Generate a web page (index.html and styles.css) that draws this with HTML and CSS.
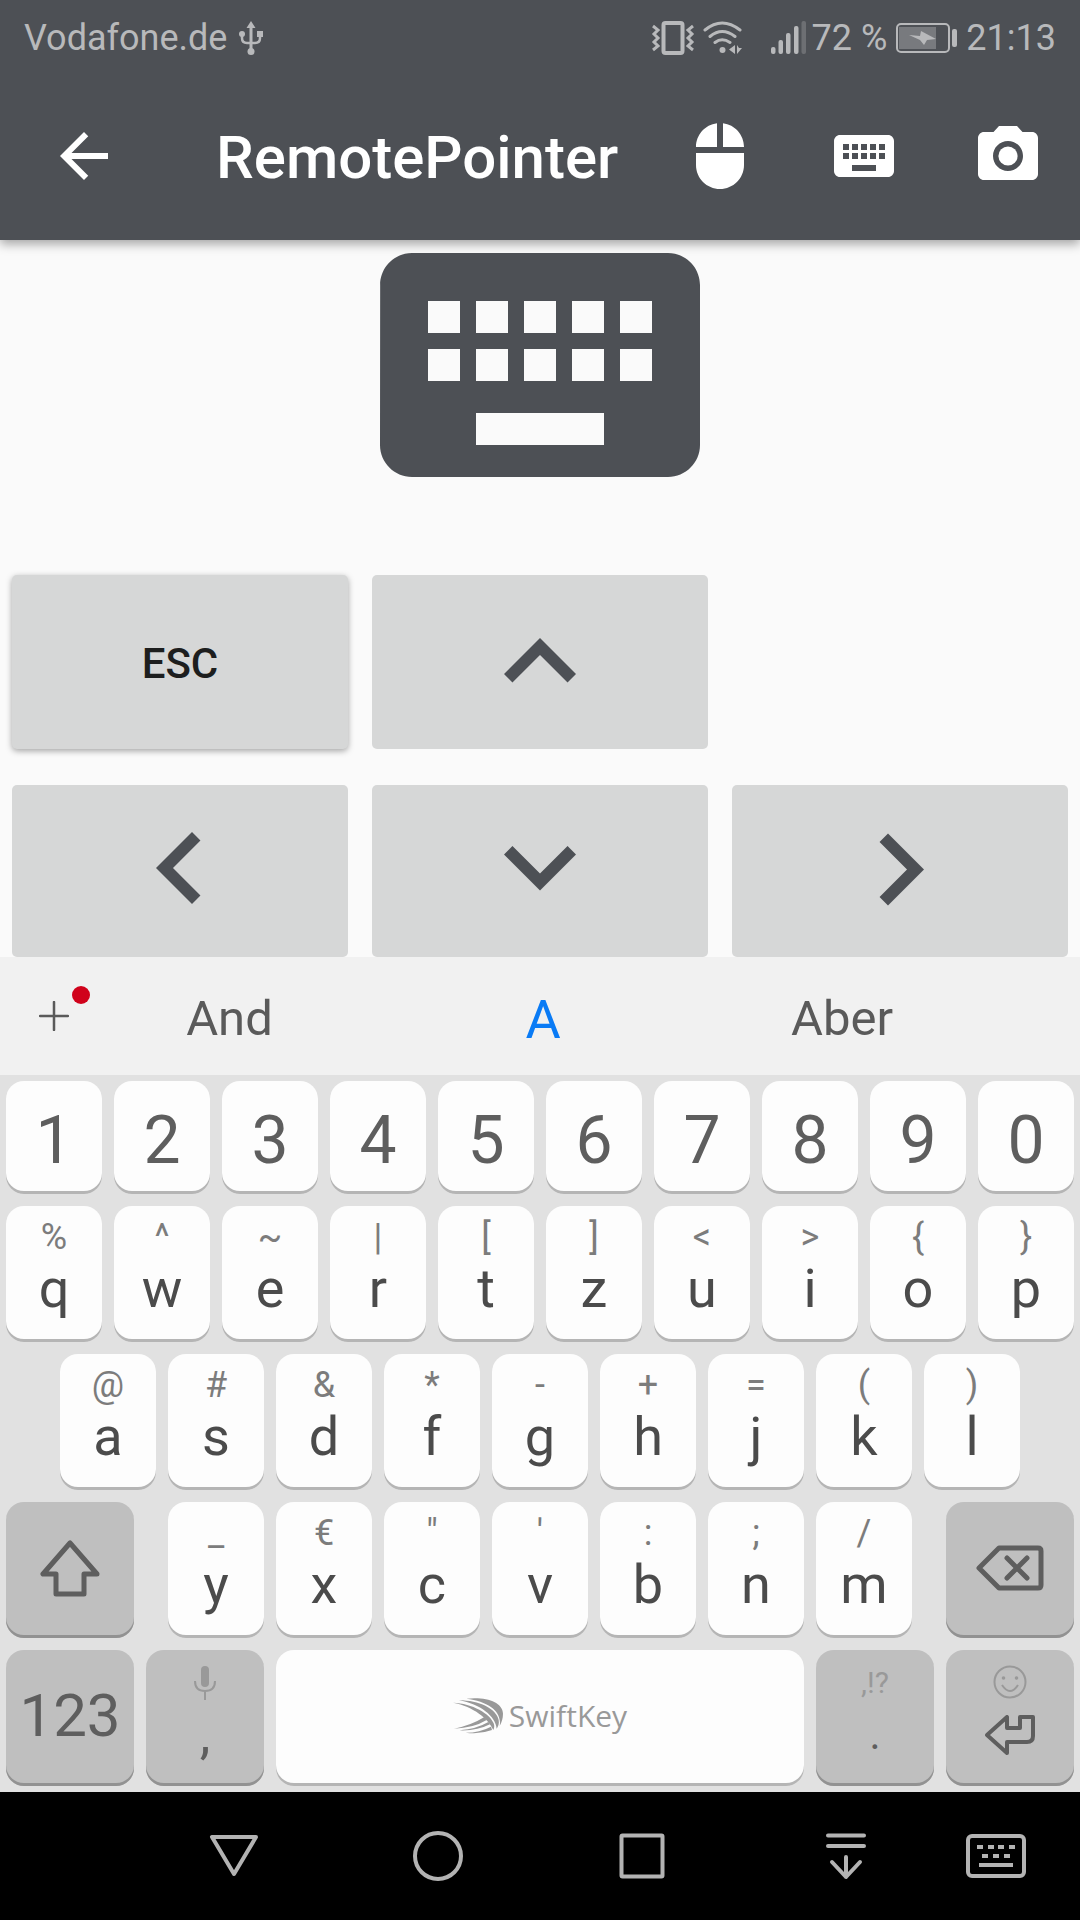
FILE: index.html
```
<!DOCTYPE html>
<html lang="en">
  <head>
    <meta charset="utf-8">
    <meta name="viewport" content="width=device-width, initial-scale=1">
    <title>RemotePointer</title>
    <link rel="stylesheet" href="styles.css">
  </head>
  <body>
    <header class="header">
      <div class="status">
        <span>Vodafone.de</span>
        <svg class="usb" width="24" height="34" viewBox="0 0 24 34" fill="currentColor">
          <path d="M12 0l4.500 7h-9zM10.500 6h3v22h-3z"/>
          <circle cx="3" cy="13" r="3"/>
          <rect x="18" y="10" width="6" height="6"/>
          <circle cx="12" cy="30.500" r="3.500"/>
          <path d="M3 14v3q0 5 5 5h8q5 0 5-5v-3" fill="none" stroke="currentColor" stroke-width="2.500"/>
        </svg>
        <span class="spacer"></span>
        <svg class="vibrate" width="44" height="34" viewBox="0 0 44 34" fill="none" stroke="currentColor">
          <rect x="12.500" y="2" width="19" height="30" rx="2" stroke-width="4"/>
          <path d="M2 5l5 4-4 4 4 4-4 4 4 4-5 4M42 5l-5 4 4 4-4 4 4 4-4 4 5 4" stroke-width="3"/>
        </svg>
        <svg class="wifi" width="40" height="34" viewBox="0 0 40 34" fill="none" stroke="currentColor" stroke-width="3" stroke-linecap="round">
          <path d="M2 9q17-14 35 0M7 15.500q12-10 25 0M12 21.500q7-5.500 15 0"/>
          <circle cx="19.500" cy="29" r="3" fill="currentColor" stroke="none"/>
          <path d="M32 24v9l-6-4.500zM34 24v9l5-6h-3z" fill="currentColor" stroke="none"/>
        </svg>
        <svg class="signal" width="35" height="34" viewBox="0 0 35 34" fill="currentColor">
          <rect x="0" y="26" width="4.500" height="7" rx="2"/>
          <rect x="7.500" y="19" width="4.500" height="14" rx="2"/>
          <rect x="15" y="12" width="4.500" height="21" rx="2"/>
          <rect x="23" y="5" width="4.500" height="28" rx="2"/>
          <rect x="30.500" y="0" width="4.500" height="33" rx="2" opacity="0.3"/>
        </svg>
        <span>72 %</span>
        <svg class="battery" width="61" height="30" viewBox="0 0 61 30">
          <rect x="1" y="1" width="52" height="28" rx="4" fill="none" stroke="currentColor" stroke-width="2"/>
          <rect x="3" y="4" width="37" height="22" fill="currentColor" opacity="0.4"/>
          <path d="M13 12l11 1 1-5 15 8-9 1-3 5-4-5z" fill="currentColor"/>
          <rect x="56" y="6" width="5" height="18" rx="2" fill="currentColor"/>
        </svg>
        <span>21:13</span>
      </div>
      <div class="toolbar">
        <button class="action back" aria-label="Back">
          <svg viewBox="0 0 24 24"><path d="M20 11H7.830l5.590-5.590L12 4l-8 8 8 8 1.410-1.410L7.830 13H20v-2z"/></svg>
        </button>
        <h1>RemotePointer</h1>
        <button class="action" aria-label="Mouse">
          <svg viewBox="0 0 24 24"><path d="M13 1.070V9h7c0-4.080-3.050-7.440-7-7.930zM4 15c0 4.420 3.580 8 8 8s8-3.580 8-8v-4H4v4zm7-13.930C7.050 1.560 4 4.920 4 9h7V1.070z"/></svg>
        </button>
        <button class="action" aria-label="Keyboard">
          <svg viewBox="0 0 24 24"><path d="M20 5H4c-1.100 0-1.990.9-1.990 2L2 17c0 1.100.9 2 2 2h16c1.100 0 2-.9 2-2V7c0-1.100-.9-2-2-2zm-9 3h2v2h-2V8zm0 3h2v2h-2v-2zM8 8h2v2H8V8zm0 3h2v2H8v-2zm-1 2H5v-2h2v2zm0-3H5V8h2v2zm9 7H8v-2h8v2zm0-4h-2v-2h2v2zm0-3h-2V8h2v2zm3 3h-2v-2h2v2zm0-3h-2V8h2v2z"/></svg>
        </button>
        <button class="action" aria-label="Camera">
          <svg viewBox="0 0 24 24"><circle cx="12" cy="12" r="3.200"/><path d="M9 2L7.170 4H4c-1.100 0-2 .9-2 2v12c0 1.100.9 2 2 2h16c1.100 0 2-.9 2-2V6c0-1.100-.9-2-2-2h-3.170L15 2H9zm3 15c-2.760 0-5-2.240-5-5s2.240-5 5-5 5 2.240 5 5-2.240 5-5 5z"/></svg>
        </button>
      </div>
    </header>

    <main class="main">
      <svg class="hero" viewBox="2 5 20 14"><path d="M20 5H4c-1.100 0-1.990.9-1.990 2L2 17c0 1.100.9 2 2 2h16c1.100 0 2-.9 2-2V7c0-1.100-.9-2-2-2zm-9 3h2v2h-2V8zm0 3h2v2h-2v-2zM8 8h2v2H8V8zm0 3h2v2H8v-2zm-1 2H5v-2h2v2zm0-3H5V8h2v2zm9 7H8v-2h8v2zm0-4h-2v-2h2v2zm0-3h-2V8h2v2zm3 3h-2v-2h2v2zm0-3h-2V8h2v2z"/></svg>
      <div class="pad">
        <button class="pad-btn esc">ESC</button>
        <button class="pad-btn" aria-label="Up"><svg viewBox="0 0 24 24"><path d="M7.410 15.410L12 10.830l4.590 4.580L18 14l-6-6-6 6z"/></svg></button>
        <span></span>
        <button class="pad-btn" aria-label="Left"><svg viewBox="0 0 24 24"><path d="M15.410 16.090l-4.580-4.590 4.580-4.590L14 5.500l-6 6 6 6z"/></svg></button>
        <button class="pad-btn" aria-label="Down"><svg viewBox="0 0 24 24"><path d="M7.410 7.840L12 12.420l4.590-4.580L18 9.250l-6 6-6-6z"/></svg></button>
        <button class="pad-btn" aria-label="Right"><svg viewBox="0 0 24 24"><path d="M8.590 16.340l4.580-4.590-4.580-4.590L10 5.750l6 6-6 6z"/></svg></button>
      </div>
    </main>

    <section class="keyboard">
      <div class="suggest">
        <button class="plus" aria-label="More">
          <svg width="30" height="30" viewBox="0 0 30 30" stroke="currentColor" stroke-width="2.500" stroke-linecap="round"><path d="M15 1v28M1 15h28"/></svg>
          <span class="dot"></span>
        </button>
        <button>And</button>
        <button class="best">A</button>
        <button>Aber</button>
      </div>

      <div class="keys">
        <div class="row digits">
          <button class="key">1</button>
          <button class="key">2</button>
          <button class="key">3</button>
          <button class="key">4</button>
          <button class="key">5</button>
          <button class="key">6</button>
          <button class="key">7</button>
          <button class="key">8</button>
          <button class="key">9</button>
          <button class="key">0</button>
        </div>
        <div class="row">
          <button class="key"><small>%</small>q</button>
          <button class="key"><small>^</small>w</button>
          <button class="key"><small>~</small>e</button>
          <button class="key"><small>|</small>r</button>
          <button class="key"><small>[</small>t</button>
          <button class="key"><small>]</small>z</button>
          <button class="key"><small>&lt;</small>u</button>
          <button class="key"><small>&gt;</small>i</button>
          <button class="key"><small>{</small>o</button>
          <button class="key"><small>}</small>p</button>
        </div>
        <div class="row home">
          <button class="key"><small>@</small>a</button>
          <button class="key"><small>#</small>s</button>
          <button class="key"><small>&amp;</small>d</button>
          <button class="key"><small>*</small>f</button>
          <button class="key"><small>-</small>g</button>
          <button class="key"><small>+</small>h</button>
          <button class="key"><small>=</small>j</button>
          <button class="key"><small>(</small>k</button>
          <button class="key"><small>)</small>l</button>
        </div>
        <div class="row">
          <button class="key dark wide shift" aria-label="Shift">
            <svg width="60" height="58" viewBox="0 0 60 58" fill="none" stroke="currentColor" stroke-width="5" stroke-linejoin="round"><path d="M30 4L3 35h13v20h28V35h13z"/></svg>
          </button>
          <button class="key"><small>_</small>y</button>
          <button class="key"><small>€</small>x</button>
          <button class="key"><small>"</small>c</button>
          <button class="key"><small>'</small>v</button>
          <button class="key"><small>:</small>b</button>
          <button class="key"><small>;</small>n</button>
          <button class="key"><small>/</small>m</button>
          <button class="key dark wide delete" aria-label="Delete">
            <svg width="68" height="46" viewBox="0 0 68 46" fill="none" stroke="currentColor" stroke-width="5" stroke-linejoin="round" stroke-linecap="round"><path d="M23 3h39q3 0 3 3v34q0 3-3 3H23L3 23z"/><path d="M31 13l20 20M51 13L31 33"/></svg>
          </button>
        </div>
        <div class="row">
          <button class="key dark wide num">123</button>
          <button class="key dark mid">
            <small><svg width="22" height="34" viewBox="0 0 22 34" fill="none" stroke="currentColor" stroke-width="2"><rect x="7" y="0" width="8" height="21" rx="4" fill="currentColor" stroke="none"/><path d="M1 15q0 10 10 10t10-10M11 25v9"/></svg></small>,
          </button>
          <button class="key space">
            <svg width="50" height="36" viewBox="0 0 150 108" fill="currentColor">
              <path d="M40 2C98-5 150 12 150 47c0 14-4 26-10 37C148 42 108 10 40 2z"/>
              <path d="M18 7C78 7 130 32 137 66c2 11-1 19-6 26C128 55 82 18 18 7z"/>
              <path d="M0 14C58 16 112 48 122 76c3 8 2 14-1 20C106 62 62 26 0 14z"/>
              <path d="M3 92q50-9 90-34l8 8Q62 90 3 92zM20 97q50-4 86-25l5 7Q72 99 20 97zM38 104q42 0 76-18l3 10Q80 110 38 104z"/>
            </svg>
            <span>SwiftKey</span>
          </button>
          <button class="key dark mid punct"><small>,!?</small>.</button>
          <button class="key dark wide enter" aria-label="Enter">
            <svg class="smile" width="34" height="34" viewBox="0 0 34 34" fill="none" stroke="currentColor" stroke-width="2"><circle cx="17" cy="17" r="15.500"/><path d="M9 20q8 12 16 0"/><circle cx="10.500" cy="13" r="1.800" fill="currentColor" stroke="none"/><circle cx="23.500" cy="13" r="1.800" fill="currentColor" stroke="none"/></svg>
            <svg width="50" height="40" viewBox="0 0 50 40" fill="none" stroke="currentColor" stroke-width="4" stroke-linejoin="round"><path d="M2 20L22 2v11h13V2h13v19q0 6-6 6H22v11z"/></svg>
          </button>
        </div>
      </div>
    </section>

    <nav class="nav">
      <button aria-label="Hide keyboard"><svg width="50" height="50" viewBox="0 0 50 50"><path d="M3 6h44L25 43z"/></svg></button>
      <button aria-label="Home"><svg width="50" height="50" viewBox="0 0 50 50"><circle cx="25" cy="25" r="23"/></svg></button>
      <button aria-label="Recent"><svg width="50" height="50" viewBox="0 0 50 50"><rect x="4.500" y="4.500" width="41" height="41" rx="1"/></svg></button>
      <button aria-label="Notifications"><svg width="50" height="50" viewBox="0 0 50 50"><path d="M7 4.500h36M7 15h36M25 26v20M11 31l14 15 14-15"/></svg></button>
      <button class="switch" aria-label="Switch keyboard"><svg width="60" height="50" viewBox="0 0 60 50"><rect x="2" y="5" width="56" height="40" rx="4"/><path class="flat" d="M11 16h6M22 16h6M32 16h6M43 16h6M16 25h6M27 25h6M38 25h6M13 34h34"/></svg></button>
    </nav>
  </body>
</html>
```
FILE: styles.css
```
* { box-sizing: border-box; }
body { margin: 0; min-height: 100vh; display: flex; flex-direction: column; background: #fafafa; font-family: Roboto, "Liberation Sans", sans-serif; }
button { border: none; padding: 0; margin: 0; background: none; color: inherit; font-family: inherit; cursor: pointer; }
svg { display: block; flex: none; }

.header { background: #4d5055; color: #fff; box-shadow: 0 4px 10px rgba(0, 0, 0, 0.35); }
.status { display: flex; align-items: center; height: 72px; padding: 3px 24px 0; color: #b8b9bb; font-size: 36px; line-height: 42px; }
.spacer { flex: 1; }
.usb { margin-left: 12px; }
.vibrate { margin-right: 8px; }
.wifi { margin-right: 28px; }
.signal { margin-right: 6px; }
.battery { margin: 0 9px; }

.toolbar { display: flex; align-items: center; height: 168px; }
.toolbar h1 { flex: 1; margin: 0; padding-top: 4px; font-size: 60px; line-height: 72px; font-weight: 500; }
.action { display: flex; align-items: center; justify-content: center; width: 144px; height: 168px; }
.action svg { width: 72px; height: 72px; fill: #fff; }
.back { justify-content: flex-start; width: 216px; padding-left: 48px; }

.main { flex: 1; display: flex; flex-direction: column; justify-content: space-between; align-items: center; padding-top: 13px; }
.hero { width: 320px; height: 224px; fill: #4d5055; position: relative; }
.pad { display: grid; grid-template-columns: repeat(3, 1fr); grid-template-rows: 174px 172px; gap: 36px 24px; width: 100%; padding: 0 12px; }
.pad-btn { display: flex; align-items: center; justify-content: center; border-radius: 5px; background: #d6d7d7; }
.pad-btn svg { width: 144px; height: 144px; fill: #4d5055; }
.esc { padding-top: 3px; color: #1d1e1e; font-size: 42px; font-weight: 500; box-shadow: 0 2px 6px rgba(0, 0, 0, 0.35); }

.keyboard { background: #e1e1e1; }
.suggest { display: grid; grid-template-columns: 108fr 243fr 384fr 214fr 131fr; height: 118px; background: #f1f1f1; color: #5a5a5a; }
.suggest button { font-size: 49px; line-height: 60px; padding-top: 6px; }
.suggest .best { color: #0a7bf5; font-size: 54px; padding-top: 8px; }
.suggest .plus { position: relative; display: flex; align-items: center; justify-content: center; padding: 0; }
.dot { position: absolute; top: 29px; right: 18px; width: 18px; height: 18px; border-radius: 50%; background: #d0021b; }

.keys { display: flex; flex-direction: column; gap: 12px; padding: 6px; }
.row { display: flex; gap: 12px; height: 136px; }
.home { padding: 0 54px; }
.key { flex: 96 1 0; display: flex; flex-direction: column; align-items: center; padding-top: 9px; border-radius: 18px; background: #fdfdfd; box-shadow: inset 0 -3px #b5b5b5; color: #4b4b4b; font-size: 54px; line-height: 60px; }
.key small { display: flex; align-items: center; height: 44px; font-size: 36px; line-height: 44px; color: #7c7c7c; }
.digits { height: 113px; }
.digits .key { justify-content: center; padding-top: 6px; font-size: 66px; color: #5e5e5e; }
.dark { background: #bfbfbf; box-shadow: inset 0 -3px #929292; color: #5e5e5e; }
.dark small { color: #999; }
.wide { flex-grow: 128; justify-content: center; padding: 0 0 4px; }
.mid { flex-grow: 118; padding-top: 11px; }
.shift { margin-right: 22px; }
.delete { margin-left: 22px; }
.num { font-size: 60px; }
.space { flex-grow: 528; flex-direction: row; justify-content: center; gap: 6px; padding: 0 0 4px; color: #999; font-family: "Open Sans", sans-serif; font-size: 30px; }
.punct { font-size: 42px; }
.punct small { font-size: 30px; }
.enter { gap: 16px; padding-bottom: 16px; }
.smile { color: #999; }

.nav { display: flex; height: 128px; padding: 0 36px 0 132px; background: #000; }
.nav button { flex: 204 1 0; display: flex; align-items: center; justify-content: center; }
.nav .switch { flex-grow: 96; }
.nav svg { fill: none; stroke: #b3b3b3; stroke-width: 4px; stroke-linejoin: round; stroke-linecap: round; }
.nav .flat { stroke-linecap: butt; }
```
